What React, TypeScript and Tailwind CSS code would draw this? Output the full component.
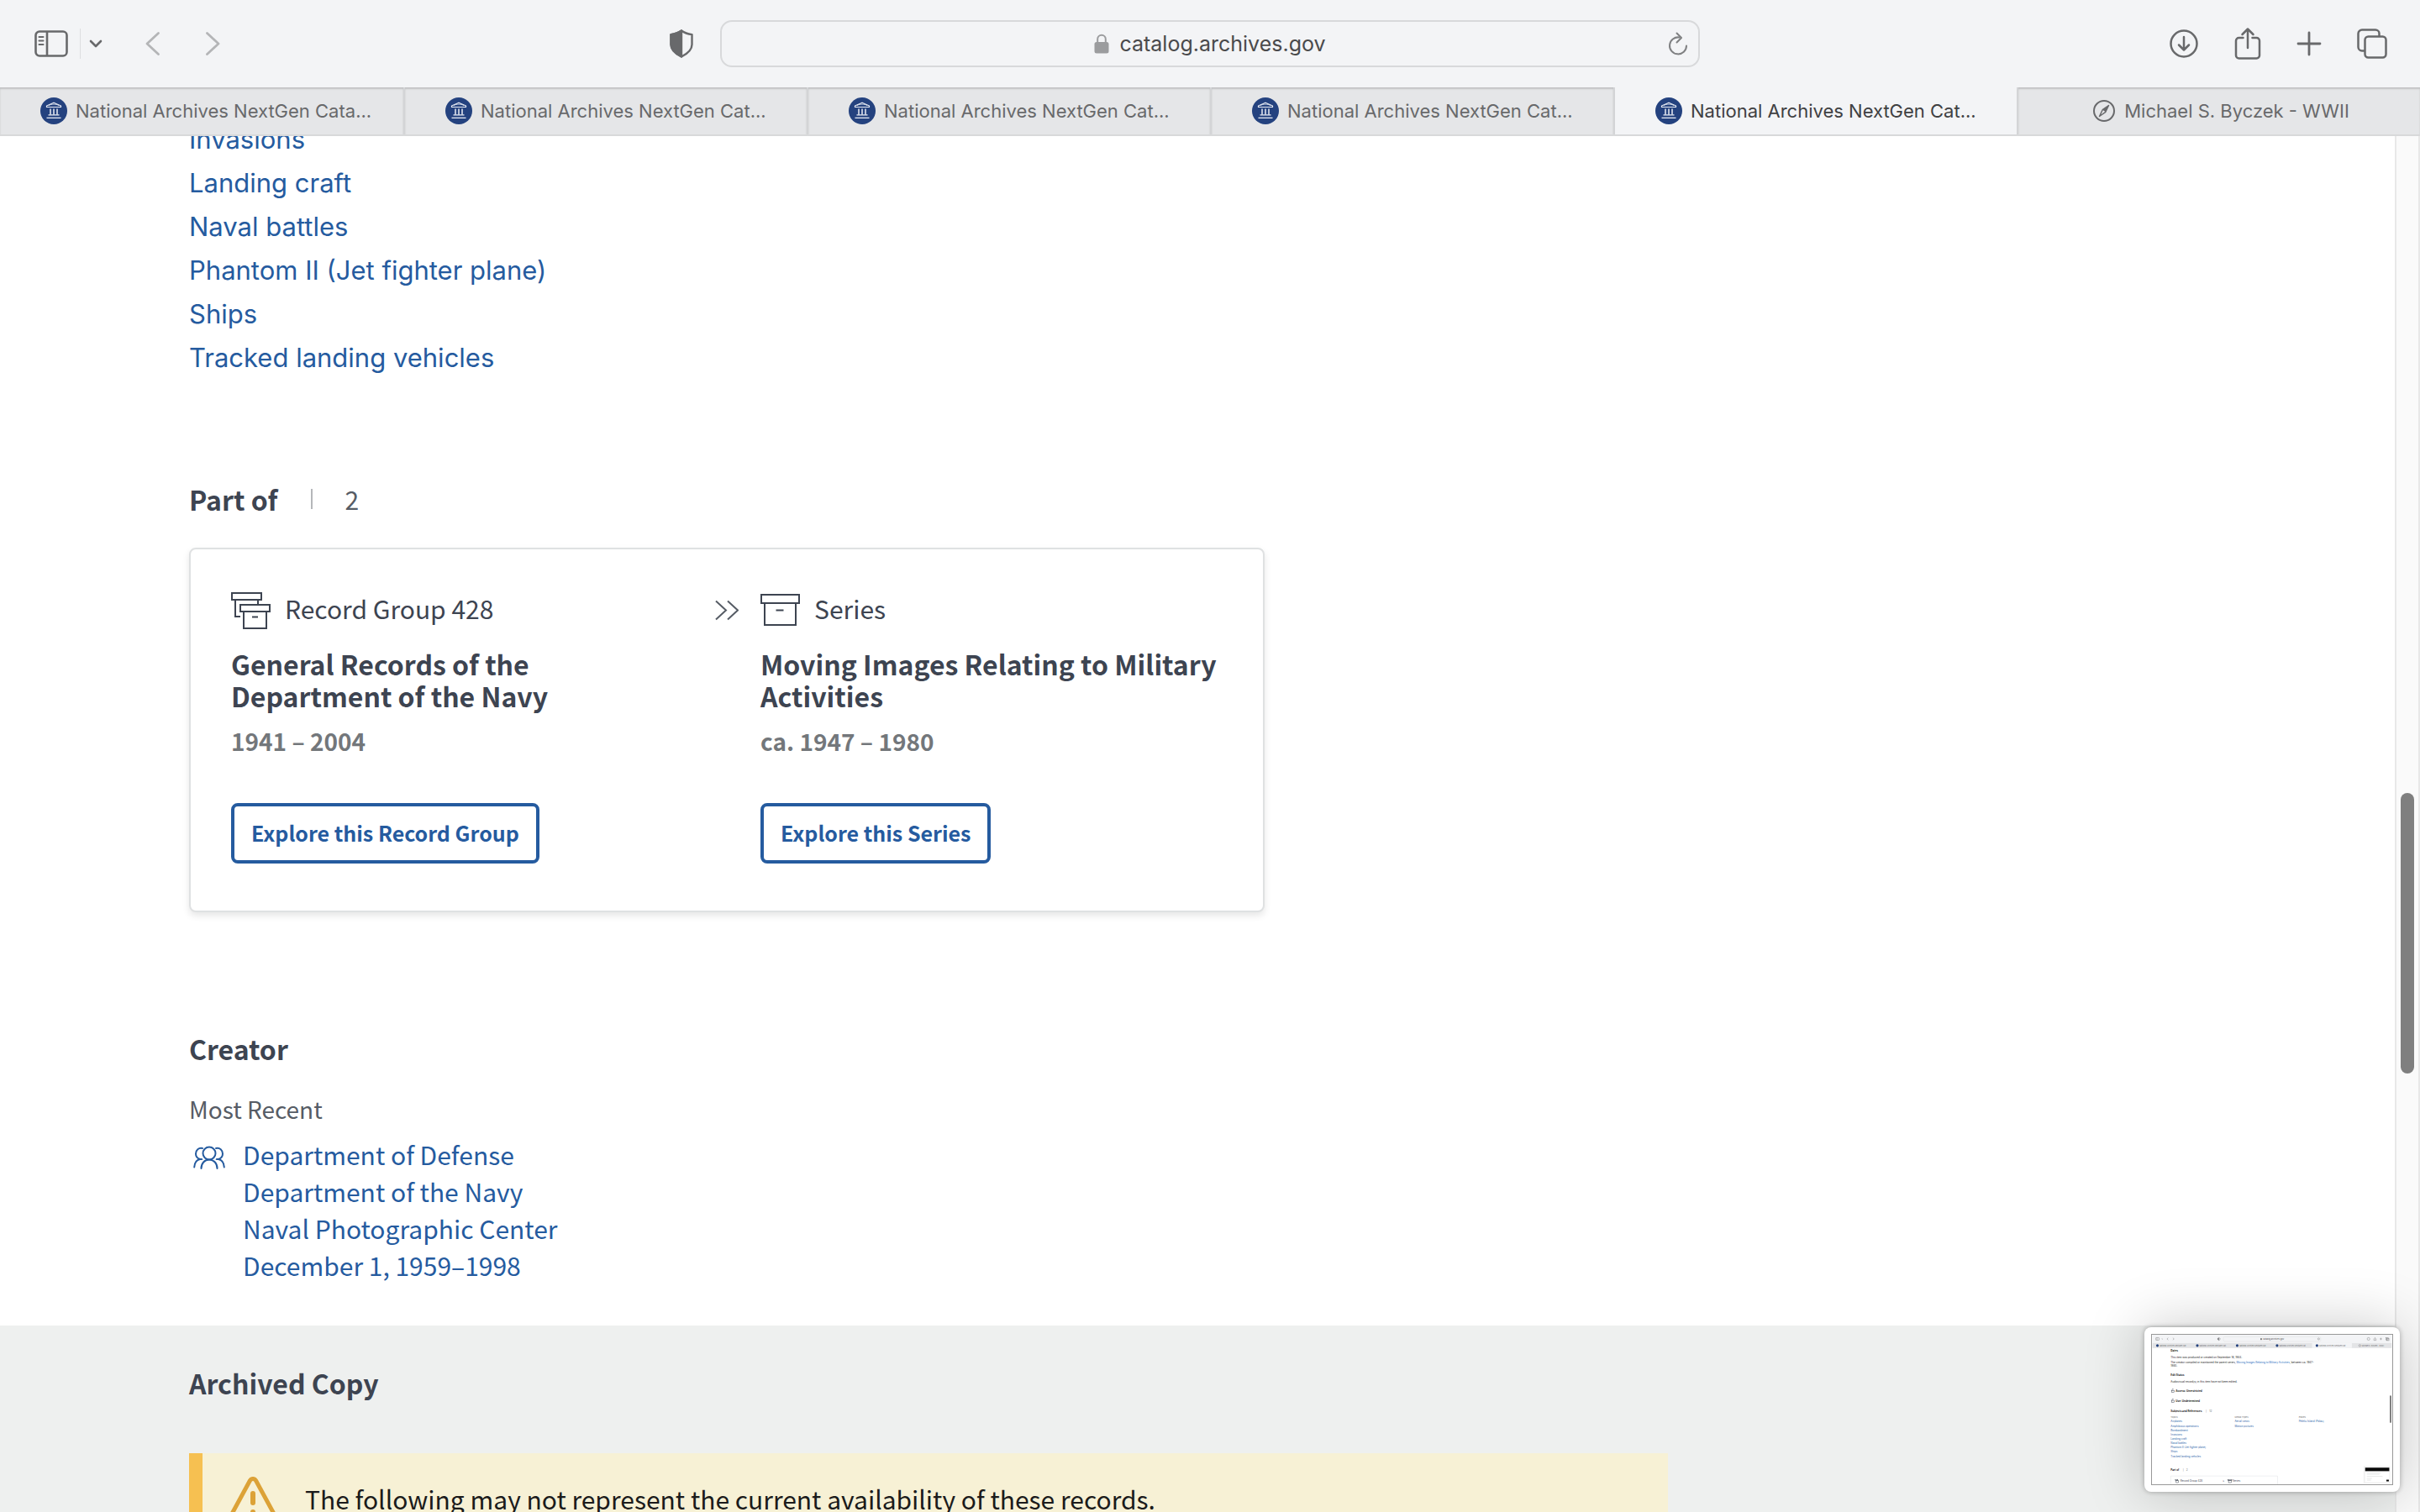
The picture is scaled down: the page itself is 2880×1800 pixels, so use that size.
import type { ReactNode } from "react";

const topics = [
  "Invasions",
  "Landing craft",
  "Naval battles",
  "Phantom II (Jet fighter plane)",
  "Ships",
  "Tracked landing vehicles",
];

const creatorLines = [
  "Department of Defense",
  "Department of the Navy",
  "Naval Photographic Center",
  "December 1, 1959–1998",
];

const tabs = [
  { title: "National Archives NextGen Cata...", active: false },
  { title: "National Archives NextGen Cat...", active: false },
  { title: "National Archives NextGen Cat...", active: false },
  { title: "National Archives NextGen Cat...", active: false },
  { title: "National Archives NextGen Cat...", active: true },
];

function Favicon() {
  return (
    <svg viewBox="0 0 32 32" className="size-8 shrink-0" aria-hidden="true">
      <circle cx="16" cy="16" r="16" fill="#24427f" />
      <g fill="none" stroke="#e9edf5" strokeWidth="1.2">
        <path d="M7.500 11.500V10L16 6.200 24.500 10v1.500z" strokeLinejoin="round" />
        <path d="M10 9.600c3-2 9-2 12 0" strokeWidth="0.800" />
        <path d="M12 13.500v7M16 13.500v7M20 13.500v7" strokeWidth="1.500" />
        <path d="M9.500 20.800h13M7.500 24.300h17" strokeWidth="1.200" />
      </g>
    </svg>
  );
}

function Compass() {
  return (
    <svg viewBox="0 0 28 28" className="size-7 shrink-0" fill="none" stroke="#68696b" aria-hidden="true">
      <circle cx="14" cy="14" r="12" strokeWidth="2" />
      <path d="M19.500 7.500 15.800 15.300 8.500 20.500 12.200 12.700z" strokeWidth="1.500" strokeLinejoin="round" />
      <path d="M19.500 7.500 15.800 15.300 12.200 12.700z" fill="#68696b" stroke="none" />
    </svg>
  );
}

function IconButton({ label, className, children }: { label: string; className?: string; children: ReactNode }) {
  return (
    <button type="button" aria-label={label} className={className}>
      {children}
    </button>
  );
}

function Toolbar() {
  return (
    <header className="grid h-[104px] shrink-0 grid-cols-[1fr_1166px_1fr] items-center bg-[#f3f4f6] text-[#68696b]">
      <div className="flex items-center pl-[41px] pr-8">
        <IconButton label="Show sidebar">
          <svg viewBox="0 0 40 32" className="h-8 w-10" fill="none" stroke="currentColor" strokeWidth="2.600">
            <rect x="1.500" y="1.500" width="37" height="29" rx="4.500" />
            <path d="M15 1.500v29" />
            <path d="M5.500 8h5M5.500 12.500h5M5.500 17h5" strokeWidth="2" strokeLinecap="round" />
          </svg>
        </IconButton>
        <span className="ml-3.5 h-9 w-px bg-[#dddee0]" />
        <IconButton label="Tab groups" className="ml-2.5">
          <svg viewBox="0 0 16 12" className="h-3 w-4" fill="none" stroke="currentColor" strokeWidth="2.600" strokeLinecap="round" strokeLinejoin="round">
            <path d="M2 3l6 6 6-6" />
          </svg>
        </IconButton>
        <IconButton label="Back" className="ml-[50px]">
          <svg viewBox="0 0 20 30" className="h-[30px] w-5" fill="none" stroke="#b4b5b7" strokeWidth="2.800" strokeLinecap="round" strokeLinejoin="round">
            <path d="M16.500 2.500 3 15l13.500 12.500" />
          </svg>
        </IconButton>
        <IconButton label="Forward" className="ml-[51px]">
          <svg viewBox="0 0 20 30" className="h-[30px] w-5" fill="none" stroke="#b4b5b7" strokeWidth="2.800" strokeLinecap="round" strokeLinejoin="round">
            <path d="M3.500 2.500 17 15 3.500 27.500" />
          </svg>
        </IconButton>
        <IconButton label="Privacy report" className="ml-auto">
          <svg viewBox="0 0 28 34" className="h-[34px] w-7" stroke="currentColor" strokeWidth="2.400" strokeLinejoin="round">
            <path d="M14 1.500c3.500 2.600 7.500 4 12.500 4.600V18c0 6.500-5.500 11-12.500 14.500C7 29 1.500 24.500 1.500 18V6.100C6.500 5.500 10.500 4.100 14 1.500z" fill="none" />
            <path d="M14 1.500C10.500 4.100 6.500 5.500 1.500 6.100V18c0 6.500 5.500 11 12.500 14.500z" fill="currentColor" />
          </svg>
        </IconButton>
      </div>
      <div className="grid h-14 grid-cols-[48px_1fr_48px] items-center rounded-[14px] border-2 border-[#d8d9db]">
        <span />
        <div className="flex items-center justify-center gap-3">
          <svg viewBox="0 0 18 24" className="h-6 w-[18px]" aria-hidden="true">
            <rect x="0.500" y="10" width="17" height="13.500" rx="2.500" fill="#9b9c9e" />
            <path d="M4.200 11V6.500a4.800 4.800 0 0 1 9.600 0V11" fill="none" stroke="#9b9c9e" strokeWidth="2" />
          </svg>
          <span className="text-[25px] leading-8 text-[#4a4a4c]">catalog.archives.gov</span>
        </div>
        <IconButton label="Reload" className="justify-self-center">
          <svg viewBox="0 0 26 28" className="h-7 w-[26px]" fill="none" stroke="#7f8082" strokeWidth="2" strokeLinecap="round" strokeLinejoin="round">
            <path d="M14.500 6.500A10 10 0 1 0 23 16.500" />
            <path d="M11.500 1.500 17 7l-5.500 5.500" />
          </svg>
        </IconButton>
      </div>
      <div className="flex items-center justify-end gap-[42px] pr-[39px]">
        <IconButton label="Downloads">
          <svg viewBox="0 0 36 36" className="size-9" fill="none" stroke="currentColor" strokeWidth="2.500" strokeLinecap="round" strokeLinejoin="round">
            <circle cx="18" cy="18" r="15.500" />
            <path d="M18 10v15M12 19.500l6 6 6-6" />
          </svg>
        </IconButton>
        <IconButton label="Share">
          <svg viewBox="0 0 32 40" className="h-10 w-8" fill="none" stroke="currentColor" strokeWidth="2.500" strokeLinecap="round" strokeLinejoin="round">
            <path d="M10.500 13H5.500A3.500 3.500 0 0 0 2 16.500V34a3.500 3.500 0 0 0 3.500 3.500h21A3.500 3.500 0 0 0 30 34V16.500a3.500 3.500 0 0 0-3.500-3.500h-5" />
            <path d="M16 25V2.500M9.500 9 16 2.500 22.500 9" />
          </svg>
        </IconButton>
        <IconButton label="New tab">
          <svg viewBox="0 0 30 30" className="size-[30px]" fill="none" stroke="currentColor" strokeWidth="2.800" strokeLinecap="round">
            <path d="M15 2v26M2 15h26" />
          </svg>
        </IconButton>
        <IconButton label="Tab overview">
          <svg viewBox="0 0 36 36" className="size-9" fill="none" stroke="currentColor" strokeWidth="2.500" strokeLinejoin="round">
            <rect x="9.500" y="9.500" width="25" height="25" rx="4" />
            <path d="M9.500 26.500H6A4.500 4.500 0 0 1 1.500 22V6A4.500 4.500 0 0 1 6 1.500h16A4.500 4.500 0 0 1 26.500 6v3.500" />
          </svg>
        </IconButton>
      </div>
    </header>
  );
}

function TabBar() {
  return (
    <nav aria-label="Browser tabs" className="grid h-[58px] shrink-0 grid-cols-6 border-b-2 border-[#d8d9da] text-[22px] leading-7 text-[#68696b]">
      {tabs.map((tab, i) => (
        <button
          key={i}
          type="button"
          className={
            tab.active
              ? "flex items-center gap-2.5 border-l-2 border-[#d3d4d6] bg-[#f3f4f6] pl-12 text-[#3f4042]"
              : "flex items-center gap-2.5 border-l-2 border-[#d3d4d6] bg-[#e5e6e8] pl-12 shadow-[inset_0_2px_2px_rgba(0,0,0,0.16)] first:border-l-0"
          }
        >
          <Favicon />
          <span className="whitespace-nowrap">{tab.title}</span>
        </button>
      ))}
      <button type="button" className="flex items-center justify-center gap-2.5 border-l-2 border-[#d3d4d6] bg-[#e5e6e8] pl-1 shadow-[inset_0_2px_2px_rgba(0,0,0,0.16)]">
        <Compass />
        <span className="whitespace-nowrap">Michael S. Byczek - WWII</span>
      </button>
    </nav>
  );
}

function RecordGroupIcon() {
  return (
    <svg viewBox="0 0 48 48" className="size-12" fill="none" stroke="#3d4451" strokeWidth="2" aria-hidden="true">
      <path d="M1 3h35v8H1zM5 11v20h6M32 11v6" />
      <path d="M11 17h35v8H11zM15 25v20h27V25M25 31.500h7" />
    </svg>
  );
}

function SeriesIcon() {
  return (
    <svg viewBox="0 0 48 48" className="size-12" fill="none" stroke="#3d4451" strokeWidth="2" aria-hidden="true">
      <path d="M1 5h45v10H1zM5 15v26h37V15M18.500 23.500h9" />
    </svg>
  );
}

function Ancestor({ icon, kind, title, dates, action }: { icon: ReactNode; kind: string; title: string; dates: string; action: string }) {
  return (
    <article className="flex flex-col items-start">
      <div className="flex h-12 items-center gap-4 text-[30px] leading-10 text-[#3d4451]">
        {icon}
        <span className="pb-1.5">{kind}</span>
      </div>
      <h3 className="mt-5 text-[32px] leading-[38px] font-bold text-[#3d4451]">{title}</h3>
      <p className="mt-[15px] text-[28px] leading-10 font-bold text-[#73777b]">{dates}</p>
      <button type="button" className="mt-[54px] h-[72px] rounded-lg border-4 border-[#255b9f] px-5 text-[25px] font-bold text-[#255b9f]">
        {action}
      </button>
    </article>
  );
}

function PartOf() {
  return (
    <section className="mt-[114px]">
      <div className="flex h-14 items-center">
        <h2 className="text-[32px] leading-10 font-bold text-[#3d4451]">Part of</h2>
        <span className="ml-10 h-6 w-0.5 bg-[#b5b7ba]" />
        <span className="ml-[38px] text-[30px] leading-10 text-[#565c65]">2</span>
      </div>
      <div className="mt-[30px] grid w-[1280px] max-w-full grid-cols-[576px_54px_1fr] rounded-lg border-2 border-[#dfe1e2] bg-white pt-[49px] pr-10 pb-14 pl-12 shadow-[0_4px_8px_rgba(0,0,0,0.1)]">
        <div className="pr-40">
          <Ancestor
            icon={<RecordGroupIcon />}
            kind="Record Group 428"
            title="General Records of the Department of the Navy"
            dates="1941 – 2004"
            action="Explore this Record Group"
          />
        </div>
        <svg viewBox="0 0 28 48" className="h-12 w-7" fill="none" stroke="#565c65" strokeWidth="2" aria-hidden="true">
          <path d="M1 12.500 13 23.500 1 34.500M15 12.500 27 23.500 15 34.500" />
        </svg>
        <Ancestor
          icon={<SeriesIcon />}
          kind="Series"
          title="Moving Images Relating to Military Activities"
          dates="ca. 1947 – 1980"
          action="Explore this Series"
        />
      </div>
    </section>
  );
}

function PeopleIcon() {
  return (
    <svg viewBox="0 0 40 28" className="mt-3 ml-1 h-7 w-10 shrink-0" fill="none" stroke="#255b9f" strokeWidth="2" strokeLinecap="round" aria-hidden="true">
      <circle cx="20" cy="9" r="7.500" />
      <path d="M10.500 27c0-6 4-10.500 9.500-10.500S29.500 21 29.500 27" />
      <path d="M12 3C7.500 2 4 5 4 9.500c0 3 2 5.500 5 6.500-4 .800-6.500 4.500-6.800 9.500" />
      <path d="M28 3c4.500-1 8 2 8 6.500 0 3-2 5.500-5 6.500 4 .800 6.500 4.500 6.800 9.500" />
      <path d="M9 16h2M31 16h-2" />
    </svg>
  );
}

function Creator() {
  return (
    <section className="mt-[134px]">
      <h2 className="text-[32px] leading-[56px] font-bold text-[#3d4451]">Creator</h2>
      <p className="mt-6 text-[28px] leading-10 text-[#565c65]">Most Recent</p>
      <div className="mt-3 flex">
        <PeopleIcon />
        <a href="#creator" className="ml-5 flex flex-col text-[30px] leading-[44px] text-[#255b9f]">
          {creatorLines.map((line) => (
            <span key={line}>{line}</span>
          ))}
        </a>
      </div>
    </section>
  );
}

function ArchivedCopy() {
  return (
    <section className="mt-[50px] bg-[#eef0ef] pt-10 pb-14 pl-[225px]">
      <h2 className="text-[32px] leading-[56px] font-bold text-[#3d4451]">Archived Copy</h2>
      <div className="mt-14 flex w-[1760px] max-w-full gap-[30px] border-l-16 border-[#f6c051] bg-[#f7f1d5] py-7 pl-7">
        <svg viewBox="0 0 64 60" className="h-[60px] w-16 shrink-0" fill="none" stroke="#dca237" strokeLinecap="round" strokeLinejoin="round" aria-hidden="true">
          <path d="M28.500 4.500a4 4 0 0 1 7 0l25.500 47a4 4 0 0 1-3.500 6h-51a4 4 0 0 1-3.500-6z" strokeWidth="5" />
          <path d="M32 20v11M32 42v1" strokeWidth="6" />
        </svg>
        <p className="mt-1 text-[30px] leading-[44px] text-[#1b1b1b]">
          The following may not represent the current availability of these records.
        </p>
      </div>
    </section>
  );
}

function Scrollbar() {
  return (
    <div aria-hidden="true" className="grid w-[30px] shrink-0 grid-rows-[782fr_334fr_522fr] justify-center border-x-2 border-[#e8e8e8] bg-[#fafafa]">
      <span className="row-start-2 w-4 rounded-full bg-[#7f7f7f]" />
    </div>
  );
}

const previewTabs = [4, 52, 100, 148, 196];
const previewTopics = ["Airplanes", "Amphibious operations", "Bombardment", ...topics];

function Preview() {
  return (
    <button type="button" aria-label="Screenshot preview" className="fixed right-6 bottom-6 rounded-lg bg-white p-2 shadow-[0_0_6px_rgba(0,0,0,0.3),0_0_70px_rgba(0,0,0,0.22)]">
      <svg viewBox="0 0 288 180" className="block h-[180px] w-72 border border-[#999] font-['Inter',sans-serif]" fontSize="3.100">
        <rect width="288" height="180" fill="#fff" />
        <rect width="288" height="10" fill="#f3f4f6" />
        <rect y="10" width="288" height="6" fill="#e3e4e6" />
        <rect x="192" y="10" width="48" height="6" fill="#f3f4f6" />
        <g fill="none" stroke="#68696b" strokeWidth="0.400">
          <rect x="4" y="3.500" width="4" height="3" rx="0.500" />
          <path d="M5.500 3.500v3M11 4.700l.700.700.700-.700M19 3.700 17.500 5 19 6.300M24.500 3.700 26 5l-1.500 1.300" />
          <path d="M80 3.600l1.400.600v1.500L80 6.800l-1.400-1.100V4.200z" />
          <rect x="85.500" y="2.500" width="117" height="5.500" rx="1.400" stroke="#dcdddf" />
          <circle cx="200" cy="5" r="1.100" />
          <circle cx="260" cy="5" r="1.600" />
          <path d="M266.500 4.500v2.200h2.600V4.500M267.800 5.500v-2.500M273.500 5h2.800M274.900 3.600v2.800" />
          <rect x="281" y="3.500" width="2.600" height="2.600" />
          <rect x="282" y="4.400" width="2.600" height="2.600" />
        </g>
        <path d="M80 3.600v3.200l-1.400-1.100V4.200z" fill="#68696b" />
        <rect x="130" y="4.200" width="1.600" height="2" fill="#68696b" />
        <text x="133" y="5.900" fontSize="2.600" fill="#4a4a4c">catalog.archives.gov</text>
        {previewTabs.map((x) => (
          <g key={x}>
            <circle cx={x + 2} cy="13" r="1.600" fill="#24427f" />
            <text x={x + 4.5} y="13.900" fontSize="2.200" fill="#68696b">National Archives NextGen Cat...</text>
          </g>
        ))}
        <circle cx="249.500" cy="13" r="1.200" fill="none" stroke="#68696b" strokeWidth="0.400" />
        <text x="252" y="13.900" fontSize="2.200" fill="#68696b">Michael S. Byczek - WWII</text>
        <g fill="#1b1b1b">
          <text x="22" y="20.500" fontWeight="700">Dates</text>
          <text x="22" y="28.300">This item was produced or created on September 16, 1944.</text>
          <text x="22" y="34.500">
            The creator compiled or maintained the parent series, <tspan fill="#2a6fc0">Moving Images Relating to Military Activities</tspan>, between ca. 1947–
          </text>
          <text x="22" y="38.800">1980.</text>
          <text x="22" y="50" fontWeight="700">Edit Status</text>
          <text x="22" y="57.800">Audiovisual record(s) in this item have not been edited.</text>
          <text x="28" y="69" fontWeight="700">Access: Unrestricted</text>
          <text x="28" y="81" fontWeight="700">Use: Undetermined</text>
          <text x="22" y="93" fontWeight="700">Subjects and References</text>
          <text x="22" y="164" fontWeight="700">Part of</text>
        </g>
        <g fill="none" stroke="#3d4451" strokeWidth="0.500">
          <rect x="23" y="67" width="3" height="2.300" />
          <path d="M23.700 67v-1a.800.800 0 0 1 1.600 0" />
          <rect x="23" y="79" width="3" height="2.300" />
          <path d="M23.700 79v-1a.800.800 0 0 1 1.600 0" />
          <rect x="27.500" y="174.500" width="3" height="1" />
          <rect x="28.500" y="175.500" width="3" height="2.500" />
          <rect x="91" y="174.500" width="4.500" height="1" />
          <rect x="91.500" y="175.500" width="3.500" height="2.500" />
        </g>
        <g fill="#68696b">
          <text x="64" y="92.800">|</text>
          <text x="68.500" y="93">12</text>
          <text x="36.500" y="163.800">|</text>
          <text x="40.500" y="164">2</text>
          <text x="22" y="100.500" fontSize="2.700">Topics</text>
          <text x="99" y="100.500" fontSize="2.700">Media Types</text>
          <text x="176" y="100.500" fontSize="2.700">Places</text>
        </g>
        <g fill="#2a62a8">
          {previewTopics.map((topic, i) => (
            <text key={topic} x="22" y={105.6 + i * 5.2}>{topic}</text>
          ))}
          <text x="99" y="105.600">Aerial views</text>
          <text x="99" y="110.800">Motion pictures</text>
          <text x="176" y="105.600">Peleliu Island (Palau)</text>
        </g>
        <path d="M22 180v-10h128.500v10" fill="none" stroke="#dfe1e2" strokeWidth="0.500" />
        <g fill="#3d4451">
          <text x="33.500" y="177">Record Group 428</text>
          <text x="84.500" y="177">»</text>
          <text x="96.500" y="177">Series</text>
        </g>
        <rect x="285.800" y="73" width="1.500" height="33" rx="0.700" fill="#555" />
        <rect x="254" y="158" width="32" height="21" rx="0.800" fill="#f1f1f1" />
        <rect x="256" y="160" width="29" height="17.500" fill="#fff" />
        <rect x="256" y="160" width="29" height="4.200" fill="#0a0a0a" />
        <path d="M258 166.500h17M258 168h15M258 170.500h19M258 173h6M258 175h5" stroke="#c5c6c8" strokeWidth="0.400" />
        <rect x="281.500" y="174.500" width="3" height="2" fill="#0a0a0a" />
      </svg>
    </button>
  );
}

export default function App() {
  return (
    <div className="flex h-screen flex-col overflow-hidden bg-white font-['Inter','Liberation_Sans',sans-serif]">
      <Toolbar />
      <TabBar />
      <div className="flex min-h-0 flex-1">
        <main className="min-w-0 flex-1 overflow-hidden">
          <ul className="-mt-[22px] pl-[225px] text-[31px] leading-[52px] text-[#255b9f]">
            {topics.map((topic) => (
              <li key={topic}>
                <a href="#topic">{topic}</a>
              </li>
            ))}
          </ul>
          <div className="font-['Noto_Sans_CJK_SC','Noto_Sans',sans-serif]">
            <div className="pl-[225px]">
              <PartOf />
              <Creator />
            </div>
            <ArchivedCopy />
          </div>
        </main>
        <Scrollbar />
      </div>
      <Preview />
    </div>
  );
}
